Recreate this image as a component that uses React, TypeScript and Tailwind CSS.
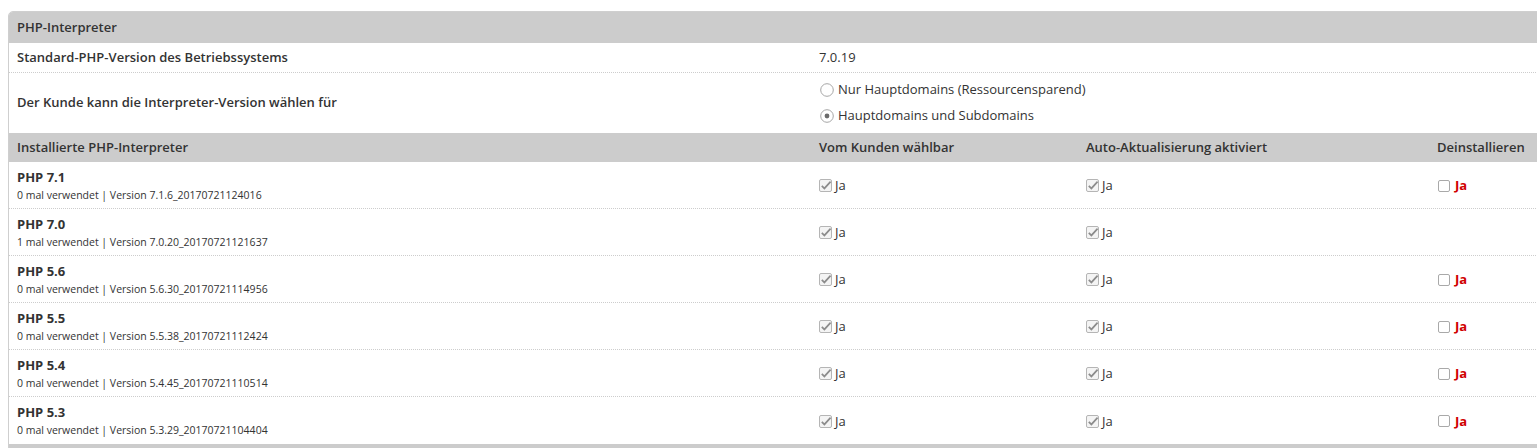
import React from 'react'

const font = { fontFamily: '"Open Sans", "Liberation Sans", sans-serif' }

interface Interpreter {
  name: string
  uses: number
  version: string
  removable: boolean
}

const interpreters: Interpreter[] = [
  { name: 'PHP 7.1', uses: 0, version: '7.1.6_20170721124016', removable: true },
  { name: 'PHP 7.0', uses: 1, version: '7.0.20_20170721121637', removable: false },
  { name: 'PHP 5.6', uses: 0, version: '5.6.30_20170721114956', removable: true },
  { name: 'PHP 5.5', uses: 0, version: '5.5.38_20170721112424', removable: true },
  { name: 'PHP 5.4', uses: 0, version: '5.4.45_20170721110514', removable: true },
  { name: 'PHP 5.3', uses: 0, version: '5.3.29_20170721104404', removable: true },
]

const cols = 'grid grid-cols-[802px_267px_351px_1fr]'

function CheckedBox() {
  return (
    <svg width="14" height="14" viewBox="0 0 14 14" className="shrink-0">
      <rect x="0.5" y="0.5" width="12" height="12" rx="1.5" fill="#f4f4f4" stroke="#b5b5b5" />
      <path d="M2.8 6.8 L5.4 9.4 L11.6 2.6" fill="none" stroke="#8c8c8c" strokeWidth="1.7" />
    </svg>
  )
}

function EmptyBox() {
  return (
    <svg width="13" height="13" viewBox="0 0 13 13" className="shrink-0">
      <rect x="0.5" y="0.5" width="11" height="11" rx="1.5" fill="#fff" stroke="#a9a9a9" />
    </svg>
  )
}

function Radio({ checked }: { checked?: boolean }) {
  return (
    <svg width="14" height="14" viewBox="0 0 14 14" className="shrink-0">
      <circle cx="7" cy="7" r="6.3" fill="#fff" stroke="#a6a6a6" />
      {checked && <circle cx="7" cy="7" r="2.4" fill="#6b6b6b" />}
    </svg>
  )
}

export default function App() {
  return (
    <div className="bg-white min-h-[448px] pl-2 pt-[11px] text-[#333]" style={font}>
      <div className="w-[1531px] border border-[#cfcfcf] rounded-tl-[5px] overflow-hidden">
        {/* Section title */}
        <div className="h-[31px] bg-[#cccccc] flex items-center px-[8px] text-[13px] font-semibold">
          PHP-Interpreter
        </div>

        {/* Default version */}
        <div className={`${cols} h-[30px] items-center border-b border-dotted border-[#cdcdcd] text-[13px]`}>
          <div className="px-[8px] font-semibold">Standard-PHP-Version des Betriebssystems</div>
          <div className="px-[8px]">7.0.19</div>
        </div>

        {/* Customer choice */}
        <div className={`${cols} h-[60px] items-center text-[13px]`}>
          <div className="px-[8px] font-semibold">Der Kunde kann die Interpreter-Version wählen für</div>
          <div className="col-span-3 pr-[8px] pl-[9px] flex flex-col gap-[12px]">
            <label className="flex items-center gap-[4px] h-[14px]">
              <Radio />
              <span>Nur Hauptdomains (Ressourcensparend)</span>
            </label>
            <label className="flex items-center gap-[4px] h-[14px]">
              <Radio checked />
              <span>Hauptdomains und Subdomains</span>
            </label>
          </div>
        </div>

        {/* Table head */}
        <div className={`${cols} h-[29px] items-center bg-[#cccccc] text-[13px] font-semibold`}>
          <div className="px-[8px]">Installierte PHP-Interpreter</div>
          <div className="px-[8px]">Vom Kunden wählbar</div>
          <div className="px-[8px]">Auto-Aktualisierung aktiviert</div>
          <div className="px-[8px]">Deinstallieren</div>
        </div>

        {interpreters.map((php, i) => (
          <div
            key={php.name}
            className={`${cols} h-[47px] items-center ${i < interpreters.length - 1 ? 'border-b border-dotted border-[#cdcdcd]' : ''}`}
          >
            <div className="px-[8px] flex flex-col">
              <span className="text-[13px] font-bold leading-[18px]">{php.name}</span>
              <span className="text-[10.5px] leading-[16px] mt-[1px]">
                {php.uses} mal verwendet | Version {php.version}
              </span>
            </div>
            <div className="px-[8px] flex items-center gap-[2px] text-[13px] pt-[2px]">
              <CheckedBox />
              <span>Ja</span>
            </div>
            <div className="px-[8px] flex items-center gap-[2px] text-[13px] pt-[2px]">
              <CheckedBox />
              <span>Ja</span>
            </div>
            <div className="pr-[8px] pl-[9px] flex items-center gap-[4px] text-[13px] pt-[2px]">
              {php.removable && (
                <>
                  <EmptyBox />
                  <span className="font-bold text-[#d00000]">Ja</span>
                </>
              )}
            </div>
          </div>
        ))}

        {/* Footer bar */}
        <div className="h-[10px] bg-[#cccccc]" />
      </div>
    </div>
  )
}
